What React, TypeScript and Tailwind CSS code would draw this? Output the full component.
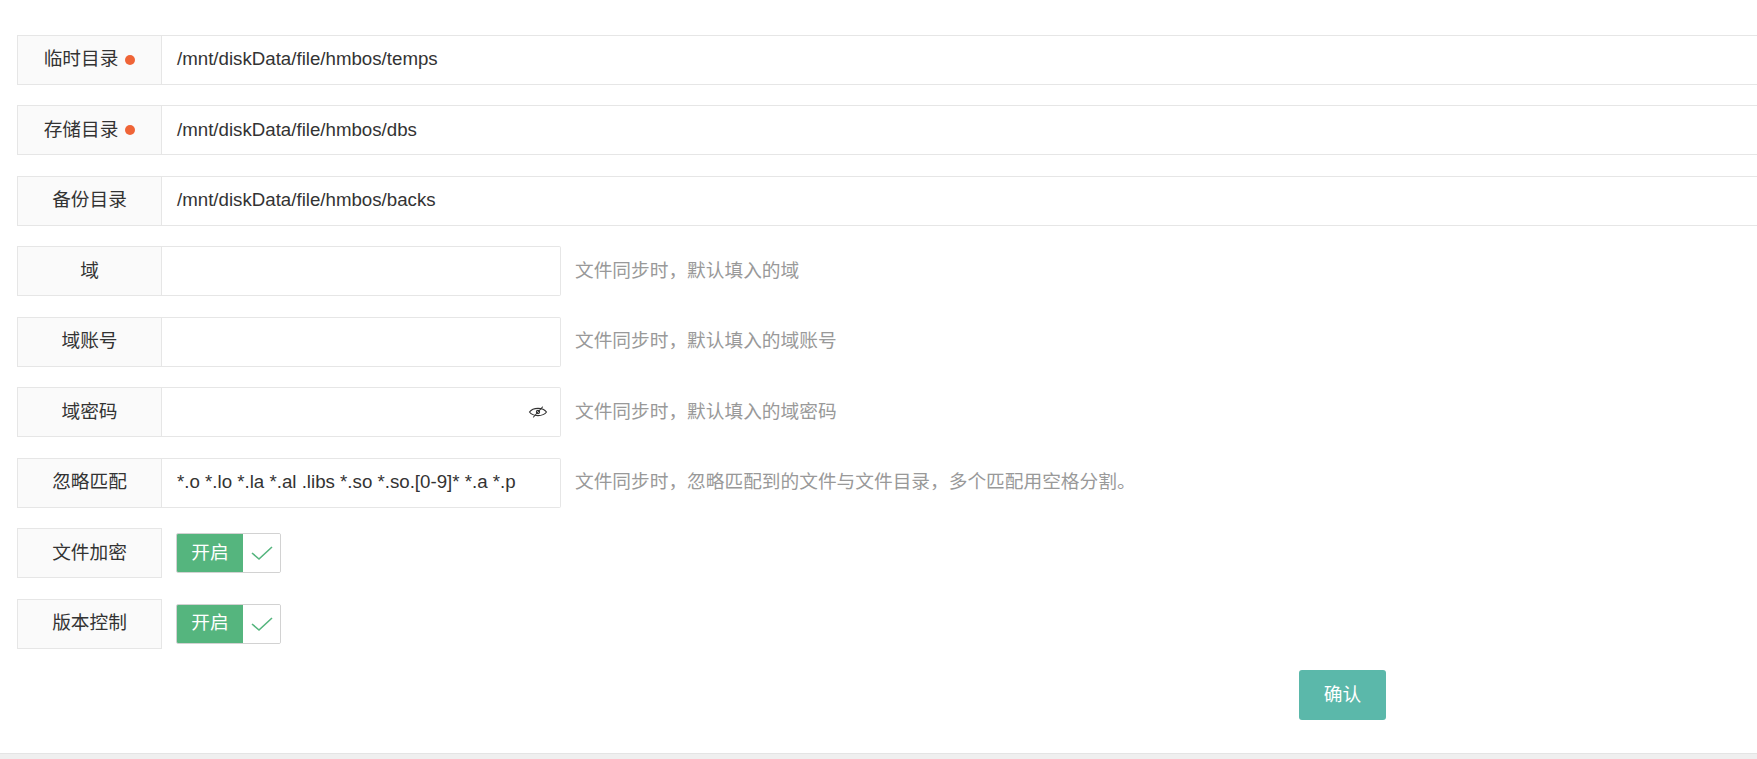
import React from 'react';

const font = { fontFamily: '"Liberation Sans", "Noto Sans CJK SC", sans-serif' };

const Label: React.FC<{ text: string; required?: boolean }> = ({ text, required }) => (
    <div className="w-[145px] h-full shrink-0 flex items-center justify-center bg-[#fafafa] border border-[#e6e6e6] text-[#333]">
        <span>{text}</span>
        {required && <span className="ml-[7px] w-[10px] h-[10px] rounded-full bg-[#ef6437]" />}
    </div>
);

const EyeOff = () => (
    <svg width="20" height="12" viewBox="0 0 20 12" fill="none" stroke="#333" strokeWidth="1.1" strokeLinecap="round">
        <path d="M1.5 6 C5 1.2, 15 1.2, 18.5 6 C15 10.8, 5 10.8, 1.5 6 Z" />
        <circle cx="10" cy="6" r="1.6" />
        <line x1="5.5" y1="11" x2="14.5" y2="1" />
    </svg>
);

const Toggle: React.FC = () => (
    <div className="ml-[14px] flex h-[40px] w-[105px] rounded-[2px] border border-[#d2d2d2] overflow-hidden">
        <div className="w-[66px] bg-[#55b57e] text-white flex items-center justify-center">开启</div>
        <div className="flex-1 bg-white flex items-center justify-center">
            <svg width="24" height="16" viewBox="0 0 24 16" fill="none" stroke="#55b57e" strokeWidth="1.6">
                <polyline points="2,8 9,14 22,2" />
            </svg>
        </div>
    </div>
);

const FullRow: React.FC<{ label: string; value: string; required?: boolean }> = ({ label, value, required }) => (
    <div className="flex h-[50px] w-[1800px]">
        <Label text={label} required={required} />
        <div className="flex-1 h-full border border-l-0 border-[#e6e6e6] flex items-center pl-[15px] text-[#333]">
            {value}
        </div>
    </div>
);

const ShortRow: React.FC<{ label: string; value?: string; help: string; eye?: boolean }> = ({ label, value, help, eye }) => (
    <div className="flex h-[50px] items-center">
        <Label text={label} />
        <div className="w-[399px] h-full border border-l-0 border-[#e6e6e6] rounded-r-[2px] flex items-center justify-between pl-[15px] pr-[12px] text-[#333]">
            <span>{value}</span>
            {eye && <EyeOff />}
        </div>
        <div className="ml-[14px] text-[#999]">{help}</div>
    </div>
);

const SwitchRow: React.FC<{ label: string }> = ({ label }) => (
    <div className="flex h-[50px] items-center">
        <Label text={label} />
        <Toggle />
    </div>
);

export default function App() {
    return (
        <div className="h-[759px] w-full overflow-hidden flex flex-col bg-white text-[18.7px]" style={font}>
            <div className="h-[753px] shrink-0 pt-[34.5px] pl-[17px]">
                <div className="flex flex-col gap-[20.5px]">
                    <FullRow label="临时目录" value="/mnt/diskData/file/hmbos/temps" required />
                    <FullRow label="存储目录" value="/mnt/diskData/file/hmbos/dbs" required />
                    <FullRow label="备份目录" value="/mnt/diskData/file/hmbos/backs" />
                    <ShortRow label="域" help="文件同步时，默认填入的域" />
                    <ShortRow label="域账号" help="文件同步时，默认填入的域账号" />
                    <ShortRow label="域密码" help="文件同步时，默认填入的域密码" eye />
                    <ShortRow label="忽略匹配" value="*.o *.lo *.la *.al .libs *.so *.so.[0-9]* *.a *.p" help="文件同步时，忽略匹配到的文件与文件目录，多个匹配用空格分割。" />
                    <SwitchRow label="文件加密" />
                    <SwitchRow label="版本控制" />
                </div>
                <div className="mt-[21.5px] pl-[1282px]">
                    <button className="w-[87px] h-[50px] rounded-[3px] bg-[#5bb8aa] text-white">确认</button>
                </div>
            </div>
            <div className="flex-1 bg-[#efefef] border-t border-[#e4e4e4]" />
        </div>
    );
}
